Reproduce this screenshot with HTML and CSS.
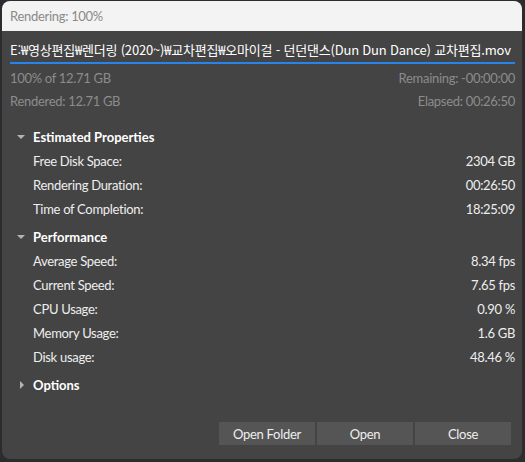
FILE: index.html
```html
<!DOCTYPE html>
<html lang="ko">
<head>
  <meta charset="UTF-8">
  <title>Rendering: 100%</title>
  <link rel="stylesheet" href="styles.css">
</head>
<body>
  <div class="window">
    <div class="titlebar">Rendering: 100%</div>
    <div class="content">
      <div class="path">E:₩영상편집₩렌더링 (2020~)₩교차편집₩오마이걸 - 던던댄스(Dun Dun Dance) 교차편집.mov</div>
      <div class="progress"><div class="progress-fill" style="width: 100%"></div></div>
      <div class="stat"><span>100% of 12.71 GB</span><span>Remaining: -00:00:00</span></div>
      <div class="stat"><span>Rendered: 12.71 GB</span><span>Elapsed: 00:26:50</span></div>

      <div class="section first">
        <div class="section-head"><span class="arrow down"></span>Estimated Properties</div>
        <div class="row"><span>Free Disk Space:</span><span>2304 GB</span></div>
        <div class="row"><span>Rendering Duration:</span><span>00:26:50</span></div>
        <div class="row"><span>Time of Completion:</span><span>18:25:09</span></div>
      </div>

      <div class="section">
        <div class="section-head"><span class="arrow down"></span>Performance</div>
        <div class="row"><span>Average Speed:</span><span>8.34 fps</span></div>
        <div class="row"><span>Current Speed:</span><span>7.65 fps</span></div>
        <div class="row"><span>CPU Usage:</span><span>0.90 %</span></div>
        <div class="row"><span>Memory Usage:</span><span>1.6 GB</span></div>
        <div class="row"><span>Disk usage:</span><span>48.46 %</span></div>
      </div>

      <div class="section">
        <div class="section-head"><span class="arrow right"></span>Options</div>
      </div>

      <div class="buttons">
        <button class="btn">Open Folder</button>
        <button class="btn">Open</button>
        <button class="btn">Close</button>
      </div>
    </div>
  </div>
</body>
</html>
```

FILE: styles.css
```css
body { margin: 0; background: #2c2c2e; font-family: Lato, "Noto Sans CJK KR", sans-serif; font-size: 13px; letter-spacing: -0.3px; }
.window { margin: 1px 0 0 2px; width: 520px; height: 458px; background: #444; border-radius: 8px; overflow: hidden; display: flex; flex-direction: column; }
.titlebar { height: 30px; line-height: 30px; background: #f3f3f3; color: #8a8a8a; padding-left: 8px; }
.content { flex: 1; display: flex; flex-direction: column; padding: 0 7px 14px 8px; }
.path { margin-top: 9px; line-height: 20px; color: #fff; white-space: nowrap; font-family: "Noto Sans CJK KR", sans-serif; letter-spacing: -0.2px; }
.progress { margin-top: 2px; height: 2px; background: #555; }
.progress-fill { height: 100%; background: #2784ea; }
.stat { display: flex; justify-content: space-between; line-height: 23px; color: #8c8c8c; }
.progress + .stat { margin-top: 3px; }
.section { margin-top: 4px; }
.section.first { margin-top: 12px; }
.section-head { position: relative; line-height: 24px; padding-left: 23px; color: #fff; font-weight: bold; letter-spacing: 0; }
.arrow { position: absolute; left: 7px; top: 10px; width: 0; height: 0; }
.arrow.down { border-left: 4px solid transparent; border-right: 4px solid transparent; border-top: 4px solid #b4b4b4; }
.arrow.right { left: 10px; top: 8px; border-top: 4px solid transparent; border-bottom: 4px solid transparent; border-left: 4px solid #b4b4b4; }
.row { display: flex; justify-content: space-between; line-height: 24px; padding-left: 23px; color: #eee; }
.buttons { margin-top: auto; display: flex; justify-content: flex-end; gap: 2px; padding-right: 4px; }
.btn { width: 96px; height: 23px; border: none; background: #555; color: #eee; font-family: inherit; font-size: 13px; letter-spacing: inherit; padding: 0; }
```
